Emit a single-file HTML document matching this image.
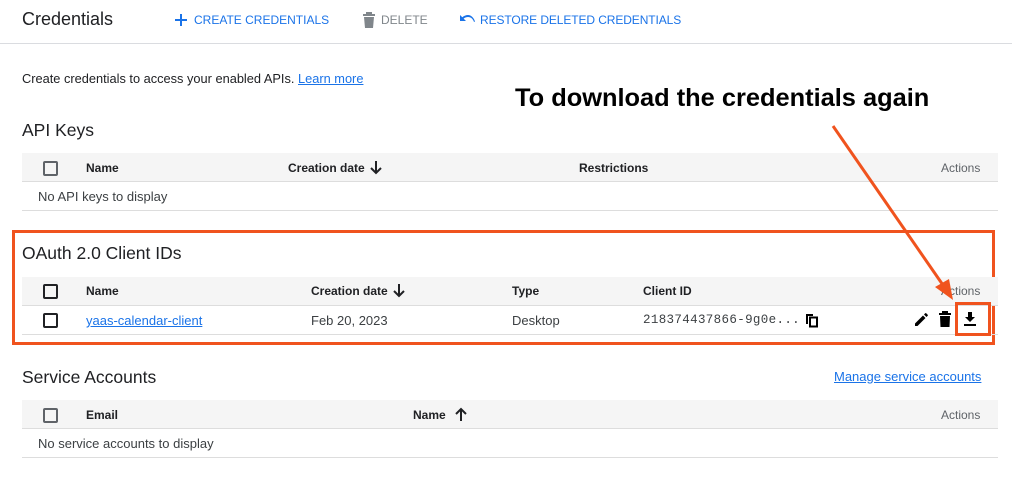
<!DOCTYPE html>
<html><head><style>
*{margin:0;padding:0;box-sizing:border-box}
body{width:1012px;height:504px;background:#fff;font-family:"Liberation Sans",Arial,sans-serif;color:#202124;position:relative;overflow:hidden}
.a{position:absolute;white-space:nowrap}
.hdr{position:absolute;left:22px;width:976px;height:29px;background:#f5f5f5;border-bottom:1px solid #ddd}
.row{position:absolute;left:22px;width:976px;height:29px;border-bottom:1px solid #ddd}
.th{font-size:12px;font-weight:bold;color:#202124}
.td{font-size:13px;color:#3c4043}
.cb{position:absolute;width:15px;height:15px;border:2px solid #5f6368;border-radius:2px}
.cbk{border-color:#202124}
.blue{color:#1a73e8}
.link{color:#1a73e8;text-decoration:underline}
.h2{font-size:17.5px;color:#202124}
</style></head><body>
<div class="a" style="left:22px;top:9px;font-size:18px">Credentials</div>
<svg class="a" style="left:174px;top:13px" width="14" height="14" viewBox="0 0 14 14"><path d="M7 1v12M1 7h12" stroke="#1a73e8" stroke-width="2"/></svg>
<div class="a blue" style="left:194px;top:13px;font-size:12px">CREATE CREDENTIALS</div>
<svg class="a" style="left:362px;top:12px" width="14" height="16" viewBox="0 0 14 16"><path d="M1 2h12v2H1zM4 0h6v2H4zM2 5h10l-1 11H3z" fill="#80868b"/></svg>
<div class="a" style="left:381px;top:13px;font-size:12px;color:#80868b">DELETE</div>
<svg class="a" style="left:459px;top:13px" width="16" height="12" viewBox="0 0 16 12"><path d="M1 2v6h6L4.6 5.6C6 4.5 7.6 4 9 4c3 0 5 2 6 5l1-.5C14.8 4.8 12.2 2 9 2 7 2 5 2.8 3.3 4.3z" fill="#1a73e8"/></svg>
<div class="a blue" style="left:480px;top:13px;font-size:12px;letter-spacing:-0.1px">RESTORE DELETED CREDENTIALS</div>
<div class="a" style="left:0;top:43px;width:1012px;height:1px;background:#dadce0"></div>
<div class="a" style="left:22px;top:71px;font-size:12.8px">Create credentials to access your enabled APIs. <span class="link">Learn more</span></div>
<div class="a" style="left:515px;top:84px;font-size:25.4px;font-weight:bold;color:#000">To download the credentials again</div>

<div class="a h2" style="left:22px;top:120px">API Keys</div>
<div class="hdr" style="top:153px"></div>
<div class="cb" style="left:43px;top:161px"></div>
<div class="a th" style="left:86px;top:161px">Name</div>
<div class="a th" style="left:288px;top:161px">Creation date</div>
<svg class="a" style="left:369px;top:160px" width="14" height="15" viewBox="0 0 14 15"><path d="M7 1v12M2 8l5 5 5-5" stroke="#202124" stroke-width="2" fill="none"/></svg>
<div class="a th" style="left:579px;top:161px">Restrictions</div>
<div class="a th" style="left:941px;top:161px;font-weight:normal;color:#5f6368">Actions</div>
<div class="row" style="top:182px"></div>
<div class="a td" style="left:38px;top:189px">No API keys to display</div>

<div class="a" style="left:12px;top:230px;width:983px;height:115px;border:3px solid #f0531e"></div>
<div class="a h2" style="left:22px;top:243px">OAuth 2.0 Client IDs</div>
<div class="hdr" style="top:277px"></div>
<div class="cb cbk" style="left:43px;top:284px"></div>
<div class="a th" style="left:86px;top:284px">Name</div>
<div class="a th" style="left:311px;top:284px">Creation date</div>
<svg class="a" style="left:392px;top:283px" width="14" height="15" viewBox="0 0 14 15"><path d="M7 1v12M2 8l5 5 5-5" stroke="#202124" stroke-width="2" fill="none"/></svg>
<div class="a th" style="left:512px;top:284px">Type</div>
<div class="a th" style="left:643px;top:284px">Client ID</div>
<div class="a th" style="left:941px;top:284px;font-weight:normal;color:#5f6368">Actions</div>
<div class="row" style="top:306px"></div>
<div class="cb cbk" style="left:43px;top:313px"></div>
<div class="a link" style="left:86px;top:313px;font-size:13px">yaas-calendar-client</div>
<div class="a td" style="left:311px;top:313px">Feb 20, 2023</div>
<div class="a td" style="left:512px;top:313px">Desktop</div>
<div class="a td" style="left:643px;top:313px;font-family:'Liberation Mono',monospace;font-size:12.5px;letter-spacing:0.35px">218374437866-9g0e...</div>
<svg class="a" style="left:805px;top:313px" width="14" height="15" viewBox="0 0 14 15"><path d="M1 1h7v2H3v8H1z" fill="#000"/><rect x="5" y="4.5" width="7" height="9" stroke="#000" stroke-width="2" fill="none"/></svg>
<svg class="a" style="left:913px;top:312px" width="16" height="16" viewBox="0 0 16 16"><path d="M2 11.5V14h2.5l8-8L10 3.5zM11 2.5l2.5 2.5 1.2-1.2c.3-.3.3-.7 0-1L13.2 1.3c-.3-.3-.7-.3-1 0z" fill="#000"/></svg>
<svg class="a" style="left:938px;top:311px" width="14" height="17" viewBox="0 0 14 17"><path d="M1 2h12v2H1zM4 0h6v2H4zM2 5h10l-.5 11h-9z" fill="#000"/></svg>
<div class="a" style="left:955px;top:302px;width:36px;height:34px;border:3px solid #f0531e"></div>
<svg class="a" style="left:962px;top:311px" width="16" height="16" viewBox="0 0 16 16"><path d="M6 1h4v5h3l-5 5-5-5h3zM2 13h12v2H2z" fill="#000"/></svg>
<svg class="a" style="left:0;top:0" width="1012" height="504"><path d="M833 126L945 288" stroke="#f0531e" stroke-width="3"/><path d="M953 300L935 287l14-8z" fill="#f0531e"/></svg>

<div class="a h2" style="left:22px;top:367px">Service Accounts</div>
<div class="a link" style="left:834px;top:369px;font-size:13px">Manage service accounts</div>
<div class="hdr" style="top:400px"></div>
<div class="cb" style="left:43px;top:408px"></div>
<div class="a th" style="left:86px;top:408px">Email</div>
<div class="a th" style="left:413px;top:408px">Name</div>
<svg class="a" style="left:454px;top:407px" width="14" height="15" viewBox="0 0 14 15"><path d="M7 14V2M2 7l5-5 5 5" stroke="#202124" stroke-width="2" fill="none"/></svg>
<div class="a th" style="left:941px;top:408px;font-weight:normal;color:#5f6368">Actions</div>
<div class="row" style="top:429px"></div>
<div class="a td" style="left:38px;top:436px">No service accounts to display</div>
</body></html>
